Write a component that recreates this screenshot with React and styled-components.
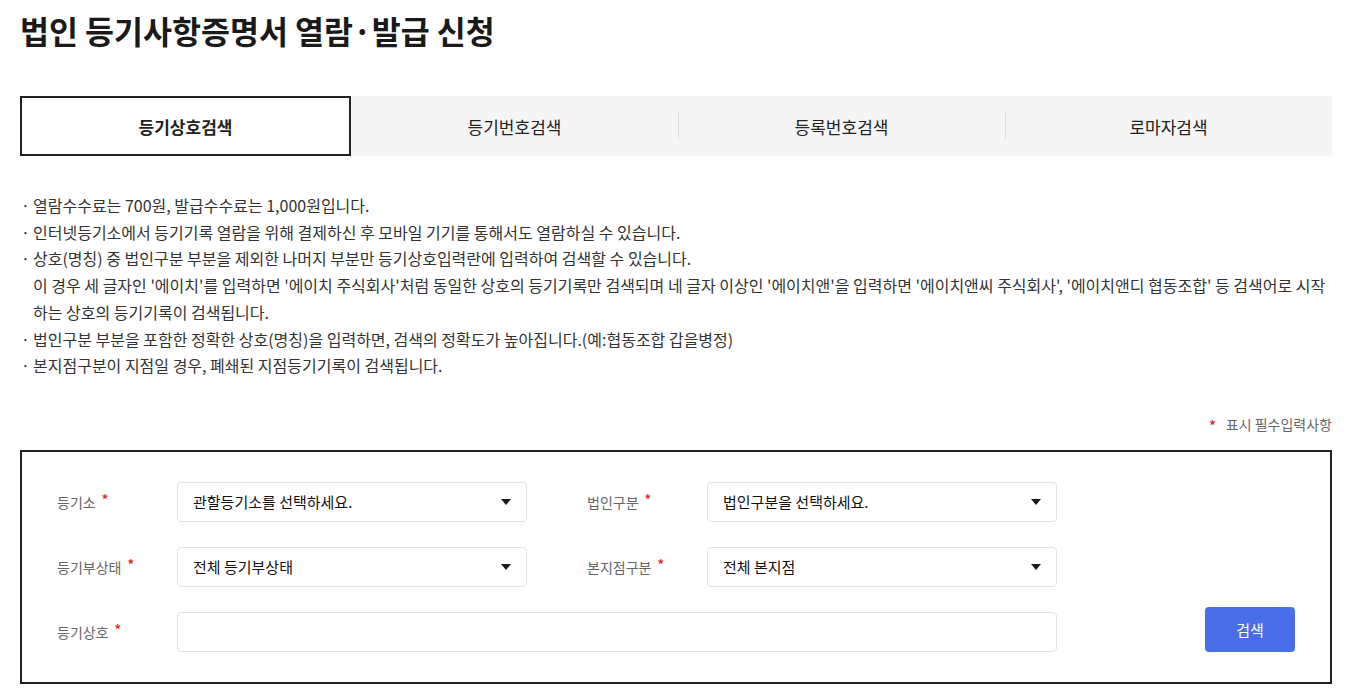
import React from "react";
import styled, { createGlobalStyle } from "styled-components";

const Global = createGlobalStyle`
  * { box-sizing: border-box; }
  html, body { margin: 0; padding: 0; background: #fff; }
  body {
    font-family: "Noto Sans CJK KR", "Noto Sans", "Liberation Sans", sans-serif;
    color: #222;
  }
`;

const Page = styled.div`
  padding: 0 20px;
`;

const Title = styled.h1`
  margin: 10px 0 46px;
  font-size: 31.5px;
  line-height: 40px;
  font-weight: 700;
  color: #1a1a1a;
  letter-spacing: 0;
`;

const Tabs = styled.div`
  display: grid;
  grid-template-columns: 331px 1fr 1fr 1fr;
  height: 60px;
  background: #f5f5f5;
`;

const Tab = styled.button`
  position: relative;
  border: ${(p) => (p.$active ? "2px solid #222" : "none")};
  background: ${(p) => (p.$active ? "#fff" : "transparent")};
  font-family: inherit;
  font-size: 17px;
  font-weight: ${(p) => (p.$active ? 700 : 400)};
  color: #222;
  padding: 0;
  cursor: pointer;
  &::before {
    content: "";
    display: ${(p) => (p.$sep ? "block" : "none")};
    position: absolute;
    left: 0;
    top: 17px;
    height: 26px;
    width: 1px;
    background: #dcdcdc;
  }
`;

const InfoList = styled.ul`
  list-style: none;
  margin: 36px 0 0;
  padding: 0;
  font-size: 16px;
  line-height: 26.7px;
  color: #333;
`;

const InfoItem = styled.li`
  position: relative;
  padding-left: 13px;
  &::before {
    content: "·";
    position: absolute;
    left: 1px;
    top: 0;
  }
`;

const Required = styled.p`
  margin: 35px 0 15px;
  text-align: right;
  font-size: 14px;
  line-height: 20px;
  color: #666;
`;

const NoteStar = styled.span`
  color: #d4302b;
  margin-right: 10px;
  font-size: 13px;
  font-weight: 700;
`;

const FormBox = styled.div`
  border: 2px solid #222;
  padding: 30px 35px;
  display: grid;
  grid-template-columns: 120px 350px 60px 120px 350px 1fr;
  grid-auto-rows: 40px;
  row-gap: 25px;
  align-items: center;
`;

const Label = styled.label`
  grid-column: ${(p) => p.$col};
  font-size: 14px;
  line-height: 20px;
  color: #666;
  display: flex;
  align-items: center;
`;

const LabelStar = styled.span`
  color: #d4302b;
  font-size: 13px;
  font-weight: 700;
  line-height: 14px;
  margin-left: 6px;
  margin-top: -5px;
`;

const SelectBox = styled.div`
  grid-column: ${(p) => p.$col};
  height: 40px;
  border: 1px solid #e3e3e3;
  border-radius: 4px;
  display: flex;
  align-items: center;
  justify-content: space-between;
  padding: 0 15px 0 15px;
  font-size: 15px;
  color: #111;
`;

const Caret = styled.span`
  width: 0;
  height: 0;
  border-left: 5px solid transparent;
  border-right: 5px solid transparent;
  border-top: 6px solid #1a1a1a;
`;

const TextInput = styled.input`
  grid-column: 2 / 6;
  height: 40px;
  border: 1px solid #e3e3e3;
  border-radius: 4px;
  padding: 0 15px;
  font-family: inherit;
  font-size: 15px;
  outline: none;
`;

const SearchButton = styled.button`
  grid-column: 6;
  justify-self: end;
  align-self: start;
  margin-top: -5px;
  width: 90px;
  height: 45px;
  border: none;
  border-radius: 4px;
  background: #4a6de9;
  color: #fff;
  font-family: inherit;
  font-size: 15px;
  cursor: pointer;
`;

const Select = ({ col, children }) => (
  <SelectBox $col={col}>
    <span>{children}</span>
    <Caret />
  </SelectBox>
);

const Req = ({ col, children }) => (
  <Label $col={col}>
    <span>{children}</span>
    <LabelStar>*</LabelStar>
  </Label>
);

export default function App() {
  return (
    <Page>
      <Global />
      <Title>법인 등기사항증명서 열람·발급 신청</Title>
      <Tabs>
        <Tab $active>등기상호검색</Tab>
        <Tab>등기번호검색</Tab>
        <Tab $sep>등록번호검색</Tab>
        <Tab $sep>로마자검색</Tab>
      </Tabs>
      <InfoList>
        <InfoItem>열람수수료는 700원, 발급수수료는 1,000원입니다.</InfoItem>
        <InfoItem>인터넷등기소에서 등기기록 열람을 위해 결제하신 후 모바일 기기를 통해서도 열람하실 수 있습니다.</InfoItem>
        <InfoItem>
          상호(명칭) 중 법인구분 부분을 제외한 나머지 부분만 등기상호입력란에 입력하여 검색할 수 있습니다.
          <br />
          이 경우 세 글자인 '에이치'를 입력하면 '에이치 주식회사'처럼 동일한 상호의 등기기록만 검색되며 네 글자 이상인 '에이치앤'을 입력하면 '에이치앤씨 주식회사', '에이치앤디 협동조합' 등 검색어로 시작하는 상호의 등기기록이 검색됩니다.
        </InfoItem>
        <InfoItem>법인구분 부분을 포함한 정확한 상호(명칭)을 입력하면, 검색의 정확도가 높아집니다.(예:협동조합 갑을병정)</InfoItem>
        <InfoItem>본지점구분이 지점일 경우, 폐쇄된 지점등기기록이 검색됩니다.</InfoItem>
      </InfoList>
      <Required>
        <NoteStar>*</NoteStar>표시 필수입력사항
      </Required>
      <FormBox>
        <Req col={1}>등기소</Req>
        <Select col={2}>관할등기소를 선택하세요.</Select>
        <Req col={4}>법인구분</Req>
        <Select col={5}>법인구분을 선택하세요.</Select>

        <Req col={1}>등기부상태</Req>
        <Select col={2}>전체 등기부상태</Select>
        <Req col={4}>본지점구분</Req>
        <Select col={5}>전체 본지점</Select>

        <Req col={1}>등기상호</Req>
        <TextInput type="text" />
        <SearchButton>검색</SearchButton>
      </FormBox>
    </Page>
  );
}
